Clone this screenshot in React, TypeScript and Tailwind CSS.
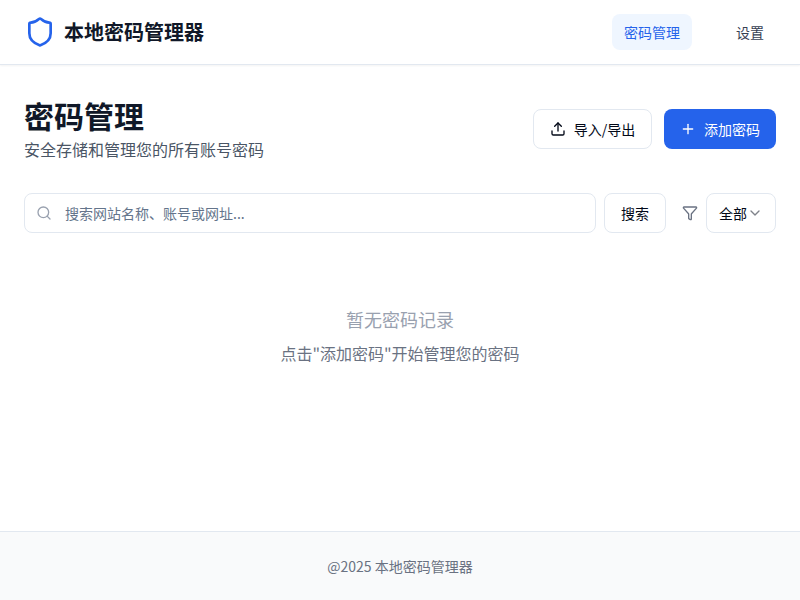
import { Shield, Upload, Plus, Search, Filter, ChevronDown } from "lucide-react";

export default function App() {
  return (
    <div className="h-[600px] flex flex-col bg-white font-['Noto_Sans_CJK_SC','Noto_Sans',sans-serif]">
      <header className="h-[65px] shrink-0 border-b border-[#e2e8f0] shadow-[0_1px_2px_0_rgba(0,0,0,0.05)] flex items-center justify-between px-6">
        <div className="flex items-center gap-2">
          <Shield className="w-8 h-8 text-[#2563eb]" strokeWidth={2} />
          <span className="text-xl font-bold text-[#101828]">本地密码管理器</span>
        </div>
        <nav className="flex items-center gap-8">
          <a className="h-9 px-3 rounded-lg bg-[#eff6ff] text-[#2563eb] text-sm flex items-center">密码管理</a>
          <a className="h-9 px-3 rounded-lg text-[#364153] text-sm flex items-center">设置</a>
        </nav>
      </header>
      <main className="flex-1 px-6 pt-8">
        <div className="flex items-center justify-between">
          <div>
            <h1 className="text-3xl leading-9 font-bold text-[#101828]">密码管理</h1>
            <p className="text-base leading-6 text-[#4a5565] mt-1">安全存储和管理您的所有账号密码</p>
          </div>
          <div className="flex items-center gap-3">
            <button className="h-10 w-[119px] rounded-lg border border-[#e2e8f0] bg-white text-sm text-[#020817] flex items-center justify-center gap-2">
              <Upload className="w-4 h-4" />
              导入/导出
            </button>
            <button className="h-10 w-28 rounded-lg bg-[#2563eb] text-sm text-white flex items-center justify-center gap-2">
              <Plus className="w-4 h-4" />
              添加密码
            </button>
          </div>
        </div>
        <div className="flex items-center gap-2 mt-8">
          <div className="relative flex-1">
            <Search className="absolute left-3 top-3 w-4 h-4 text-[#99a1af]" />
            <input
              className="w-full h-10 pl-10 pr-3 rounded-lg border border-[#e2e8f0] bg-white text-sm outline-none placeholder:text-[#64748b]"
              placeholder="搜索网站名称、账号或网址..."
            />
          </div>
          <button className="h-10 w-[62px] rounded-lg border border-[#e2e8f0] bg-white text-sm text-[#020817]">搜索</button>
          <div className="flex items-center gap-2 ml-2">
            <Filter className="w-4 h-4 text-[#6a7282]" />
            <button className="h-10 w-[70px] px-3 rounded-lg border border-[#e2e8f0] bg-white text-sm text-[#020817] flex items-center justify-between">
              全部
              <ChevronDown className="w-4 h-4 opacity-50" />
            </button>
          </div>
        </div>
        <div className="flex flex-col items-center mt-[72px]">
          <p className="text-lg leading-7 text-[#99a1af]">暂无密码记录</p>
          <p className="text-base leading-6 text-[#6a7282] mt-2">点击"添加密码"开始管理您的密码</p>
        </div>
      </main>
      <footer className="h-[69px] shrink-0 border-t border-[#e2e8f0] bg-[#f9fafb] flex items-center justify-center text-sm text-[#6a7282]">
        @2025 本地密码管理器
      </footer>
    </div>
  );
}
